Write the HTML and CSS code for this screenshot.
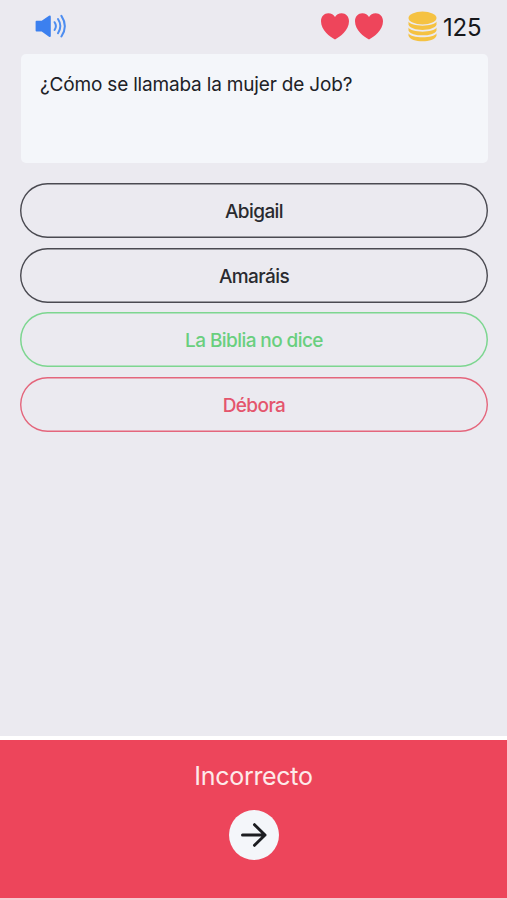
FILE: index.html
```html
<!DOCTYPE html>
<html lang="es">
<head>
<meta charset="utf-8">
<meta name="viewport" content="width=device-width, initial-scale=1">
<title>Trivia</title>
<link rel="stylesheet" href="styles.css">
</head>
<body>
<main class="quiz">
  <header class="topbar">
    <svg class="sound" viewBox="0 0 32 26" aria-label="Sonido">
      <path class="speaker" d="M1.500 7.800h5.200L14 2.700q1.800-.8 1.800 1v19q0 1.800-1.800 1L6.700 18.500H1.500Q.6 18.500.6 17.500V8.800Q.6 7.800 1.500 7.800Z"/>
      <path class="wave" d="M19.600 9.200q2.600 3.900 0 7.800M23 6q4.700 7.100 0 14.200M26.400 2.900q6.900 10.300 0 20.600"/>
    </svg>
    <div class="lives">
      <svg class="heart" viewBox="0 0 28 27"><path d="M14 26.400C9 23.900 0 17.500 0 8.300 0 3.500 3.300.3 7.300.3c3 0 5.500 1.500 6.700 3.800C15.200 1.800 17.700.3 20.700.3c4 0 7.300 3.200 7.300 8 0 9.200-9 15.600-14 18.100Z"/></svg>
      <svg class="heart" viewBox="0 0 28 27"><path d="M14 26.400C9 23.900 0 17.500 0 8.300 0 3.500 3.300.3 7.300.3c3 0 5.500 1.500 6.700 3.800C15.200 1.800 17.700.3 20.700.3c4 0 7.300 3.200 7.300 8 0 9.200-9 15.600-14 18.100Z"/></svg>
    </div>
    <svg class="coins" viewBox="0 0 29 31">
      <ellipse cx="14.500" cy="7" rx="14" ry="6.500"/>
      <path d="M.5 10.500C3 16 26 16 28.500 10.500v3.300C26 20.600 3 20.600.5 13.800Z"/>
      <path d="M.5 16.600C3 22 26 22 28.500 16.600v2.800C26 26 3 26 .5 19.400Z"/>
      <path d="M.5 22.200C3 27.600 26 27.600 28.500 22.200v2.600C26 32.200 3 32.200.5 24.800Z"/>
    </svg>
    <span class="score">125</span>
  </header>
  <section class="question">¿Cómo se llamaba la mujer de Job?</section>
  <div class="answers">
    <button class="answer">Abigail</button>
    <button class="answer">Amaráis</button>
    <button class="answer correct">La Biblia no dice</button>
    <button class="answer wrong">Débora</button>
  </div>
  <footer class="result">
    <div class="verdict">Incorrecto</div>
    <button class="next" aria-label="Siguiente">
      <svg viewBox="0 0 26 24"><path d="M1.500 12H24M13.500 1.700 24 12 13.500 22.300"/></svg>
    </button>
  </footer>
</main>
</body>
</html>
```
FILE: styles.css
```css
* { box-sizing: border-box; }
body {
  margin: 0;
  background: #ebeaf0;
  color: #202126;
  font-family: Inter, "Liberation Sans", sans-serif;
}
button { font: inherit; border: 0; padding: 0; background: none; }
svg { display: block; }
.quiz { height: 900px; display: flex; flex-direction: column; }
.topbar {
  height: 54px;
  padding: 0 24px 0 35px;
  display: flex;
  align-items: flex-start;
}
.sound { width: 32px; height: 26px; margin-top: 13px; }
.speaker { fill: #3c80ef; }
.wave { fill: none; stroke: #4d8df0; stroke-width: 2; stroke-linecap: round; }
.lives { display: flex; gap: 6px; margin: 13px 25px 0 auto; }
.heart { width: 28px; height: 27px; fill: #ee455b; }
.coins { width: 29px; height: 31px; margin-top: 11px; fill: #f5c242; }
.score {
  width: 40px;
  margin: 13px 0 0 6px;
  font-size: 24px;
  line-height: 30px;
  letter-spacing: -0.2px;
  color: #16171b;
}
.question {
  height: 109px;
  margin: 0 19px 0 21px;
  padding: 19px;
  border-radius: 5px;
  background: #f4f6fa;
  font-size: 19px;
  line-height: 24px;
  letter-spacing: -0.18px;
}
.answers { display: flex; flex-direction: column; gap: 9.700px; margin: 20px 19px 0 20px; }
.answer {
  height: 55px;
  border-radius: 27.500px;
  box-shadow: inset 0 0 0 1.400px #4a4a51;
  color: #292a2f;
  font-size: 19px;
  font-weight: 500;
  line-height: 24px;
  padding-top: 3px;
  letter-spacing: -0.58px;
}
.correct { color: #69cf7e; box-shadow: inset 0 0 0 1.500px #7dd690; }
.wrong { color: #e4556c; box-shadow: inset 0 0 0 1.400px #e4667c; }
.result {
  height: 164px;
  margin-top: auto;
  border-top: 4px solid #fff;
  border-bottom: 2px solid #f8cbd2;
  background: #ed455b;
  display: flex;
  flex-direction: column;
  align-items: center;
}
.verdict {
  margin-top: 20px;
  font-size: 25px;
  line-height: 32px;
  letter-spacing: -0.3px;
  color: #fdeaea;
}
.next {
  width: 50px;
  height: 50px;
  margin-top: 18px;
  border-radius: 50%;
  background: #f4f6fa;
  display: grid;
  place-items: center;
}
.next svg {
  width: 26px;
  height: 24px;
  fill: none;
  stroke: #1c1d21;
  stroke-width: 3;
  stroke-linecap: round;
  stroke-linejoin: round;
}
```
